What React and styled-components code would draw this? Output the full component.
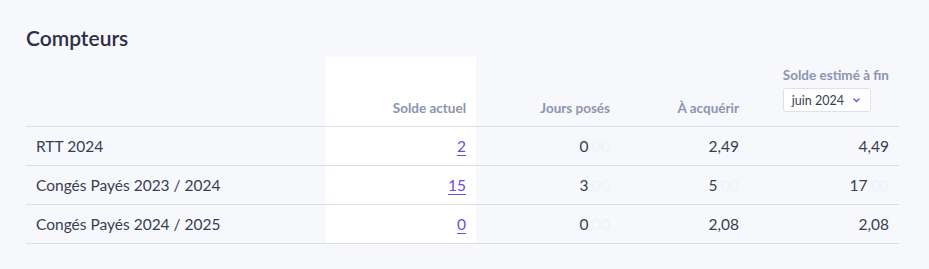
import React from "react";
import styled, { createGlobalStyle } from "styled-components";

const GlobalStyle = createGlobalStyle`
  body {
    margin: 0;
    background: #f7f8fc;
    font-family: "Lato", "Noto Sans", sans-serif;
  }
`;

const Page = styled.div`
  width: 929px;
  height: 269px;
  padding: 24px 30px 0 26px;
  box-sizing: border-box;
  background: #f7f8fc;
`;

const Title = styled.h2`
  margin: 0;
  font-size: 21px;
  font-weight: 600;
  color: #2b2f47;
  line-height: 28px;
`;

const Grid = styled.div`
  display: grid;
  grid-template-columns: 300px 150px 144px 129px 150px;
  margin-top: 5px;
`;

const Cell = styled.div`
  height: ${(p) => (p.$head ? "59px" : "38px")};
  border-bottom: 1px solid #dcdde3;
  display: flex;
  align-items: ${(p) => (p.$head ? "flex-end" : "center")};
  justify-content: ${(p) => (p.$left ? "flex-start" : "flex-end")};
  padding: ${(p) => (p.$head ? "0 10px 10px" : "0 10px")};
  box-sizing: content-box;
  background: ${(p) => (p.$white ? "#ffffff" : "transparent")};
  font-size: 15.5px;
  color: #383d52;
`;

const HeadLabel = styled.span`
  font-size: 13.5px;
  font-weight: 700;
  color: #8c94b0;
`;

const EstimateHead = styled.div`
  display: flex;
  flex-direction: column;
  align-items: flex-start;
  gap: 5px;
  margin-bottom: 4px;
`;

const Select = styled.div`
  display: flex;
  align-items: center;
  gap: 8px;
  height: 22px;
  padding: 0 9px 0 8px;
  background: #fff;
  border: 1px solid #dfe1ea;
  border-radius: 3px;
  font-size: 12.5px;
  color: #383d52;
`;

const Link = styled.a`
  color: #6a4fdc;
  text-decoration: underline;
  text-underline-offset: 3px;
`;

const Ghost = styled.span`
  color: #f0f2f9;
`;

const rows = [
  { label: "RTT 2024", actuel: "2", poses: ["0", ",00"], acq: ["2,49", ""], est: ["4,49", ""] },
  { label: "Congés Payés 2023 / 2024", actuel: "15", poses: ["3", ",00"], acq: ["5", ",00"], est: ["17", ",00"] },
  { label: "Congés Payés 2024 / 2025", actuel: "0", poses: ["0", ",00"], acq: ["2,08", ""], est: ["2,08", ""] },
];

const Num = ({ v }) => (
  <span>
    {v[0]}
    {v[1] && <Ghost>{v[1]}</Ghost>}
  </span>
);

const Chevron = () => (
  <svg width="9" height="6" viewBox="0 0 9 6">
    <path d="M1.5 1.5 L4.5 4.5 L7.5 1.5" fill="none" stroke="#7355e0" strokeWidth="1.4" />
  </svg>
);

export default function App() {
  return (
    <Page>
      <GlobalStyle />
      <Title>Compteurs</Title>
      <Grid>
        <Cell $head $left />
        <Cell $head $white>
          <HeadLabel>Solde actuel</HeadLabel>
        </Cell>
        <Cell $head>
          <HeadLabel>Jours posés</HeadLabel>
        </Cell>
        <Cell $head>
          <HeadLabel>À acquérir</HeadLabel>
        </Cell>
        <Cell $head>
          <EstimateHead>
            <HeadLabel>Solde estimé à fin</HeadLabel>
            <Select>
              juin 2024 <Chevron />
            </Select>
          </EstimateHead>
        </Cell>
        {rows.map((r) => (
          <React.Fragment key={r.label}>
            <Cell $left>{r.label}</Cell>
            <Cell $white>
              <Link href="#">{r.actuel}</Link>
            </Cell>
            <Cell>
              <Num v={r.poses} />
            </Cell>
            <Cell>
              <Num v={r.acq} />
            </Cell>
            <Cell>
              <Num v={r.est} />
            </Cell>
          </React.Fragment>
        ))}
      </Grid>
    </Page>
  );
}
